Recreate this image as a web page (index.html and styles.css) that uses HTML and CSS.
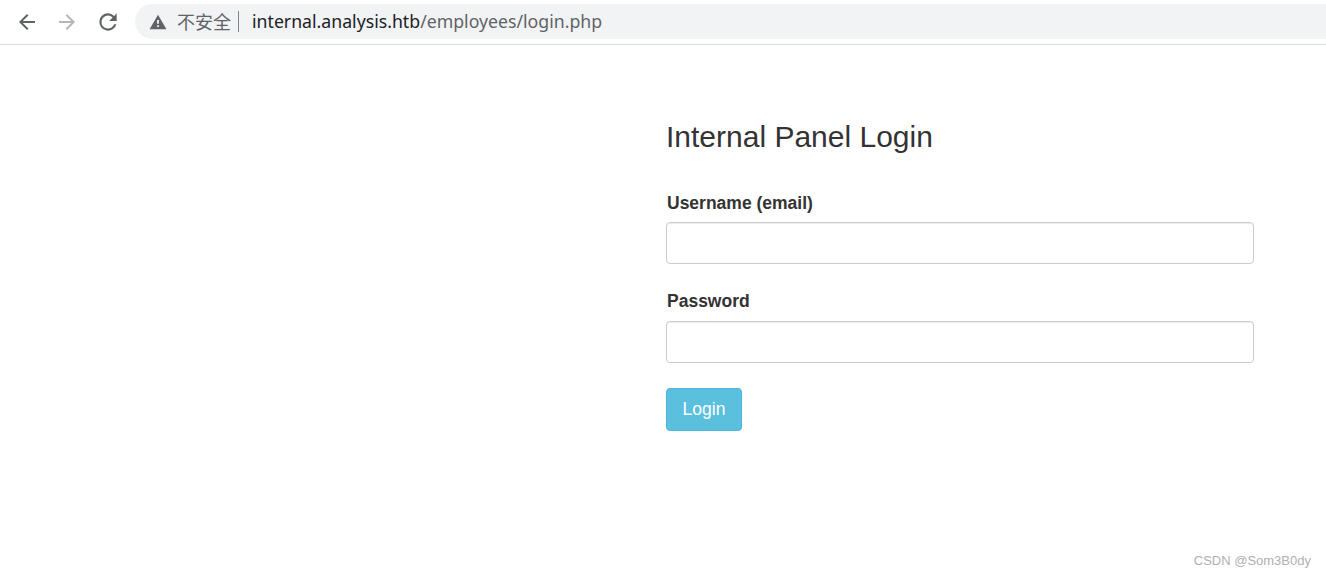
FILE: index.html
```html
<!DOCTYPE html>
<html lang="zh-CN">
<head>
  <meta charset="UTF-8">
  <meta name="viewport" content="width=device-width, initial-scale=1.0">
  <title>Internal Panel Login</title>
  <link rel="stylesheet" href="styles.css">
</head>
<body>
  <div class="toolbar">
    <svg class="nav-icon" viewBox="0 0 24 24"><path d="M20 11H7.83l5.59-5.59L12 4l-8 8 8 8 1.41-1.41L7.83 13H20v-2z"/></svg>
    <svg class="nav-icon nav-icon-off" viewBox="0 0 24 24"><path d="M12 4l-1.41 1.41L16.17 11H4v2h12.17l-5.58 5.59L12 20l8-8z"/></svg>
    <svg class="nav-icon nav-icon-reload" viewBox="0 0 24 24"><path d="M17.65 6.35A7.96 7.96 0 0 0 12 4a8 8 0 1 0 7.73 10h-2.08A6 6 0 1 1 12 6c1.66 0 3.14.69 4.22 1.78L13 11h7V4l-2.35 2.35z"/></svg>
    <div class="omnibox">
      <svg class="warn-icon" viewBox="0 0 16 16"><path d="M8 1.5L.5 14.5h15L8 1.5zM8.8 12.5H7.2v-1.6h1.6v1.6zm0-3H7.2V6.2h1.6v3.3z"/></svg>
      <span class="not-secure">不安全</span>
      <span class="divider"></span>
      <span class="url"><span class="url-host">internal.analysis.htb</span>/employees/login.php</span>
    </div>
  </div>

  <div class="page">
    <form class="login-form" action="/employees/login.php" method="post">
      <h2>Internal Panel Login</h2>
      <div class="form-group">
        <label for="username">Username (email)</label>
        <input type="text" id="username" name="username">
      </div>
      <div class="form-group">
        <label for="password">Password</label>
        <input type="password" id="password" name="password">
      </div>
      <button type="submit" class="login-btn">Login</button>
    </form>
  </div>

  <div class="watermark">CSDN @Som3B0dy</div>
</body>
</html>
```

FILE: styles.css
```css
html, body {
  height: 100%;
}

body {
  margin: 0;
  background-color: #fff;
  font-family: "Liberation Sans", Arial, sans-serif;
  color: #333;
  overflow: hidden;
}

.toolbar {
  display: flex;
  align-items: center;
  height: 44px;
  padding-left: 15px;
  border-bottom: 1px solid #dadce0;
}

.nav-icon {
  width: 24px;
  height: 24px;
  margin-right: 16px;
  margin-top: -1px;
  fill: #5f6368;
}

.nav-icon-off {
  fill: #b4b6b9;
}

.nav-icon-reload {
  width: 26px;
  height: 26px;
  margin-right: 14px;
}

.omnibox {
  display: flex;
  align-items: center;
  flex: 1;
  height: 35px;
  margin-top: -1px;
  padding-left: 14px;
  background-color: #f1f3f4;
  border-radius: 18px 0 0 18px;
  font-family: "Noto Sans", "Noto Sans CJK SC", sans-serif;
  font-size: 17.7px;
}

.warn-icon {
  width: 18px;
  height: 18px;
  fill: #5f6368;
  margin-right: 10px;
}

.not-secure {
  margin-bottom: 2px;
  color: #5f6368;
  font-family: "Noto Sans CJK SC", sans-serif;
  font-size: 18px;
}

.divider {
  width: 1px;
  height: 21px;
  margin: 0 13px 0 7px;
  background-color: #80868b;
}

.url {
  margin-bottom: 2px;
  color: #5f6368;
}

.url-host {
  color: #202124;
}

.page {
  display: flex;
  justify-content: flex-end;
  padding-right: 72px;
}

.login-form {
  width: 588px;
  padding-top: 74px;
}

.login-form h2 {
  margin: 0 0 35.5px;
  font-size: 30px;
  font-weight: 400;
  line-height: 36px;
}

.form-group {
  margin-bottom: 25px;
}

.form-group label {
  display: block;
  margin-bottom: 7.5px;
  padding-left: 1px;
  font-size: 17.5px;
  font-weight: 700;
  line-height: 24px;
}

.form-group input {
  display: block;
  width: 100%;
  height: 42px;
  box-sizing: border-box;
  border: 1px solid #ccc;
  border-radius: 4px;
  box-shadow: inset 0 1px 1px rgba(0, 0, 0, 0.075);
}

.login-btn {
  display: block;
  width: 76px;
  height: 43px;
  padding: 0;
  background-color: #5bc0de;
  border: 1px solid #46b8da;
  border-radius: 4px;
  color: #fff;
  font-family: inherit;
  font-size: 17.5px;
}

.watermark {
  position: absolute;
  right: 15px;
  bottom: 9px;
  color: #b0b0b0;
  font-size: 13px;
}
```
